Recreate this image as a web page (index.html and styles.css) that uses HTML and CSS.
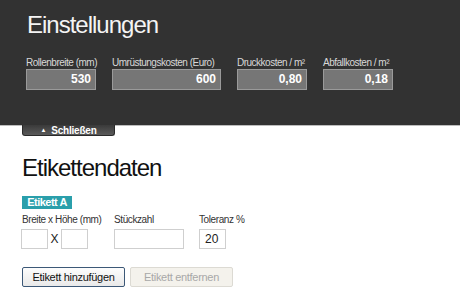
FILE: index.html
```html
<!DOCTYPE html>
<html lang="de">
<head>
<meta charset="utf-8">
<title>Einstellungen</title>
<link rel="stylesheet" href="styles.css">
</head>
<body>
<section class="settings">
  <h1 class="settings-title">Einstellungen</h1>
  <div class="settings-fields">
    <div class="field field-sm">
      <label class="field-label">Rollenbreite (mm)</label>
      <div class="dark-input">530</div>
    </div>
    <div class="field field-lg">
      <label class="field-label">Umrüstungskosten (Euro)</label>
      <div class="dark-input">600</div>
    </div>
    <div class="field field-sm">
      <label class="field-label">Druckkosten / m²</label>
      <div class="dark-input">0,80</div>
    </div>
    <div class="field field-sm">
      <label class="field-label">Abfallkosten / m²</label>
      <div class="dark-input">0,18</div>
    </div>
  </div>
</section>
<div class="tab-row">
  <button class="close-tab"><span class="arrow">▲</span>Schließen</button>
</div>
<main class="labels">
  <h2 class="labels-title">Etikettendaten</h2>
  <div class="badge">Etikett A</div>
  <div class="label-row">
    <div class="col col-size">
      <div class="row-label">Breite x Höhe (mm)</div>
      <div class="size-inputs">
        <div class="light-input small"></div>
        <span class="times">X</span>
        <div class="light-input small"></div>
      </div>
    </div>
    <div class="col col-count">
      <div class="row-label">Stückzahl</div>
      <div class="light-input wide"></div>
    </div>
    <div class="col">
      <div class="row-label">Toleranz %</div>
      <div class="light-input small value">20</div>
    </div>
  </div>
  <div class="actions">
    <button class="btn btn-primary">Etikett hinzufügen</button>
    <button class="btn btn-disabled">Etikett entfernen</button>
  </div>
</main>
</body>
</html>
```
FILE: styles.css
```css
body {
  margin: 0;
  font-family: "Liberation Sans", Arial, sans-serif;
  background: #fff;
}
.settings {
  background: #323232;
  height: 125px;
  box-sizing: border-box;
  padding: 11px 0 0 26px;
  box-shadow: 0 1px 0 #bdbdbd;
}
.settings-title {
  margin: 0 0 0 1px;
  font-size: 24px;
  letter-spacing: -1px;
  line-height: 28px;
  font-weight: normal;
  color: #f4f4f4;
}
.settings-fields {
  display: flex;
  gap: 16px;
  margin-top: 17px;
}
.field {
  display: flex;
  flex-direction: column;
}
.field-sm { width: 70px; }
.field-lg { width: 109px; }
.field-label {
  font-size: 10px;
  letter-spacing: -0.5px;
  line-height: 13px;
  color: #d8d8d8;
  white-space: nowrap;
}
.dark-input {
  height: 21px;
  box-sizing: border-box;
  border: 1px solid #9a9a9a;
  background: #767676;
  color: #fff;
  font-weight: bold;
  font-size: 12px;
  line-height: 19px;
  text-align: right;
  padding-right: 4px;
}
.tab-row {
  padding-left: 22px;
}
.close-tab {
  display: block;
  width: 93px;
  height: 11px;
  margin: 0;
  padding: 0;
  border: 1px solid #2a2a2a;
  border-top: none;
  border-radius: 0 0 3px 3px;
  background: linear-gradient(#3a3a3a, #5a5a5a);
  color: #fff;
  font-family: "Liberation Sans", Arial, sans-serif;
  font-weight: bold;
  font-size: 10px;
  letter-spacing: -0.2px;
  line-height: 10px;
  text-align: center;
}
.arrow {
  font-size: 6px;
  margin-right: 5px;
  vertical-align: 2px;
}
.labels {
  padding: 18px 0 0 22px;
}
.labels-title {
  margin: 0;
  font-size: 24px;
  letter-spacing: -1px;
  line-height: 28px;
  font-weight: normal;
  color: #111;
}
.badge {
  display: inline-block;
  margin-top: 14px;
  height: 13px;
  width: 50px;
  box-sizing: border-box;
  background: #2a9fab;
  color: #fff;
  font-weight: bold;
  font-size: 11px;
  letter-spacing: -0.5px;
  line-height: 13px;
  text-align: center;
}
.label-row {
  display: flex;
  margin-top: 3px;
}
.col {
  display: flex;
  flex-direction: column;
}
.col-size { width: 92px; }
.col-count { width: 85px; }
.row-label {
  font-size: 10px;
  letter-spacing: -0.4px;
  line-height: 13px;
  color: #333;
  margin-bottom: 3px;
  white-space: nowrap;
}
.size-inputs {
  display: flex;
  align-items: center;
  margin-left: -1px;
}
.light-input {
  height: 20px;
  box-sizing: border-box;
  border: 1px solid #cfcfcf;
  background: #fff;
}
.light-input.small { width: 27px; }
.light-input.wide { width: 70px; }
.light-input.value {
  font-size: 12px;
  line-height: 18px;
  color: #222;
  padding-left: 5px;
}
.times {
  width: 13px;
  text-align: center;
  font-size: 12px;
  color: #222;
}
.actions {
  display: flex;
  gap: 5px;
  margin-top: 18px;
}
.btn {
  width: 103px;
  height: 20px;
  margin: 0;
  padding: 0;
  font-family: "Liberation Sans", Arial, sans-serif;
  font-size: 11px;
  letter-spacing: -0.3px;
  border-radius: 2px;
}
.btn-primary {
  border: 1px solid #3c5877;
  background: linear-gradient(#fdfdfd, #e9e9e9);
  color: #111;
}
.btn-disabled {
  border: 1px solid #dcdad3;
  background: #f4f2ec;
  color: #a8a8a8;
}
```
